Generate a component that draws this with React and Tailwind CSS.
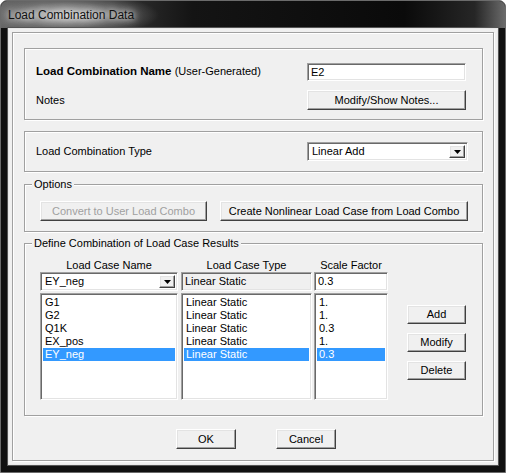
import React from "react";

const btn =
  "flex items-center justify-center bg-[#f0f0f0] border border-t-white border-l-white border-r-[#404040] border-b-[#404040] shadow-[inset_-1px_-1px_0_#a0a0a0,inset_1px_1px_0_#e3e3e3] text-[11px] leading-none text-black";
const sunken =
  "border border-t-[#a0a0a0] border-l-[#a0a0a0] border-r-white border-b-white shadow-[inset_1px_1px_0_#696969,inset_-1px_-1px_0_#e3e3e3]";
const group =
  "relative border border-[#a0a0a0] shadow-[inset_1px_1px_0_#fff,1px_1px_0_#fff]";
const legend =
  "absolute -top-[8px] left-[7px] px-[2px] bg-[#f0f0f0] leading-[14px] text-[11px] text-black";

function Arrow() {
  return (
    <div className={btn + " w-[16px] h-full"}>
      <svg width="7" height="4" viewBox="0 0 7 4">
        <path d="M0 0H7L3.5 4Z" fill="#000" />
      </svg>
    </div>
  );
}

function ListBox({ items, selected, w }) {
  return (
    <div className={sunken + " bg-white h-[107px] p-[2px]"} style={{ width: w }}>
      {items.map((t, i) => (
        <div
          key={i}
          className={
            "h-[13px] leading-[13px] text-[11px] pl-[2px] whitespace-nowrap " +
            (i === selected ? "bg-[#3399ff] text-white" : "text-black")
          }
        >
          {t}
        </div>
      ))}
    </div>
  );
}

export default function App() {
  return (
    <div className="w-[506px] h-[473px] bg-[#111111] rounded-t-[7px] border border-[#6b6b6b] flex flex-col overflow-hidden font-['Liberation_Sans',Arial,sans-serif]">
      <div className="h-[27px] flex items-center pl-[7px] bg-[radial-gradient(ellipse_90px_22px_at_68px_14px,rgba(205,205,205,0.9),rgba(130,130,130,0.55)_60%,rgba(0,0,0,0)_100%),linear-gradient(90deg,#626262_0%,#3c3c3c_18%,#141414_38%,#0a0a0a_80%,#262626_94%,#6a6a6a_100%)]">
        <span className="text-[12px] text-[#111] [text-shadow:0_0_6px_#fff,0_0_10px_#ddd]">
          Load Combination Data
        </span>
      </div>
      <div className="flex-1 flex px-[7px] pb-[7px]">
        <div className="flex-1 bg-[#f0f0f0] border border-[#e8e8e8] shadow-[0_0_0_1px_#555] p-[3px]">
          <div className="h-full border border-[#a0a0a0] shadow-[inset_1px_1px_0_#fff,1px_1px_0_#fff] pl-[11px] pr-[10px] pt-[15px] flex flex-col text-[11px] text-black">
            {/* Group 1 */}
            <div className={group + " h-[72px] pt-[14px] pl-[11px] pr-[16px] flex flex-col"}>
              <div className="flex items-center justify-between h-[18px]">
                <span className="text-[11.5px]">
                  <b>Load Combination Name</b>{" "}
                  <span className="text-[11px]">(User-Generated)</span>
                </span>
                <div className={sunken + " w-[159px] h-[18px] bg-white flex items-center pl-[3px]"}>
                  E2
                </div>
              </div>
              <div className="flex items-center justify-between h-[20px] mt-[9px]">
                <span>Notes</span>
                <div className={btn + " w-[159px] h-[20px]"}>Modify/Show Notes...</div>
              </div>
            </div>

            {/* Group 2 */}
            <div className={group + " h-[41px] mt-[11px] pt-[10px] pl-[11px] pr-[14px] flex items-start justify-between"}>
              <span className="leading-[19px]">Load Combination Type</span>
              <div className={sunken + " w-[161px] h-[19px] bg-white flex items-center p-[2px]"}>
                <span className="flex-1 pl-[2px] leading-none">Linear Add</span>
                <Arrow />
              </div>
            </div>

            {/* Group 3 */}
            <div className={group + " h-[48px] mt-[12px] pt-[16px] pl-[15px] flex"}>
              <span className={legend}>Options</span>
              <div className={btn + " w-[167px] h-[20px] !text-[#a0a0a0]"}>
                Convert to User Load Combo
              </div>
              <div className={btn + " w-[248px] h-[20px] ml-[13px]"}>
                Create Nonlinear Load Case from Load Combo
              </div>
            </div>

            {/* Group 4 */}
            <div className={group + " h-[173px] mt-[11px] pt-[14px] pl-[15px] flex"}>
              <span className={legend}>Define Combination of Load Case Results</span>
              <div className="flex flex-col w-[138px]">
                <div className="h-[14px] leading-[14px] text-center">Load Case Name</div>
                <div className={sunken + " h-[19px] bg-white flex items-center p-[2px]"}>
                  <span className="flex-1 pl-[2px] leading-none">EY_neg</span>
                  <Arrow />
                </div>
                <div className="mt-[2px]">
                  <ListBox w={138} selected={4} items={["G1", "G2", "Q1K", "EX_pos", "EY_neg"]} />
                </div>
              </div>
              <div className="flex flex-col w-[131px] ml-[3px]">
                <div className="h-[14px] leading-[14px] text-center">Load Case Type</div>
                <div className={sunken + " h-[19px] bg-[#f0f0f0] flex items-center pl-[3px]"}>
                  Linear Static
                </div>
                <div className="mt-[2px]">
                  <ListBox
                    w={131}
                    selected={4}
                    items={["Linear Static", "Linear Static", "Linear Static", "Linear Static", "Linear Static"]}
                  />
                </div>
              </div>
              <div className="flex flex-col w-[74px] ml-[2px]">
                <div className="h-[14px] leading-[14px] text-center">Scale Factor</div>
                <div className={sunken + " h-[19px] bg-white flex items-center pl-[3px]"}>0.3</div>
                <div className="mt-[2px]">
                  <ListBox w={74} selected={4} items={["1.", "1.", "0.3", "1.", "0.3"]} />
                </div>
              </div>
              <div className="flex flex-col w-[59px] ml-[19px] pt-[47px]">
                <div className={btn + " h-[19px]"}>Add</div>
                <div className={btn + " h-[19px] mt-[9px]"}>Modify</div>
                <div className={btn + " h-[19px] mt-[9px]"}>Delete</div>
              </div>
            </div>

            {/* OK / Cancel */}
            <div className="flex mt-[13px] pl-[152px]">
              <div className={btn + " w-[60px] h-[20px]"}>OK</div>
              <div className={btn + " w-[60px] h-[20px] ml-[40px]"}>Cancel</div>
            </div>
          </div>
        </div>
      </div>
    </div>
  );
}
